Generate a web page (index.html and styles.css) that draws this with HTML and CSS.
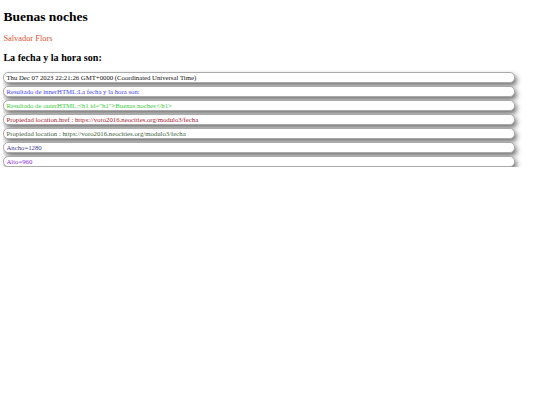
FILE: index.html
```html
<!DOCTYPE html>
<html lang="es">
<head>
<meta charset="utf-8">
<title>Fecha</title>
<link rel="stylesheet" href="styles.css">
</head>
<body>
<h1 id="h1" class="title">Buenas noches</h1>
<p class="author">Salvador Flors</p>
<h2 class="subtitle">La fecha y la hora son:</h2>
<div class="rows">
  <div class="row c-date">Thu Dec 07 2023 22:21:26 GMT+0000 (Coordinated Universal Time)</div>
  <div class="row c-inner">Resultado de innerHTML:La fecha y la hora son:</div>
  <div class="row c-outer">Resultado de outerHTML:&lt;h1 id="h1"&gt;Buenas noches&lt;/h1&gt;</div>
  <div class="row c-href">Propiedad location.href : https://voro2016.neocities.org/modulo3/fecha</div>
  <div class="row c-loc">Propiedad location : https://voro2016.neocities.org/modulo3/fecha</div>
  <div class="row c-w">Ancho=1280</div>
  <div class="row c-h">Alto=960</div>
</div>
</body>
</html>
```

FILE: styles.css
```css
html, body {
  background: #ffffff;
}
body {
  margin: 3.4px;
  font-family: "Liberation Serif", "Times New Roman", serif;
  color: #000;
}
.title {
  font-size: 13.5px;
  font-weight: bold;
  margin: 5.5px 0 9px;
}
.author {
  font-size: 8.4px;
  color: #dd5533;
  margin: 9px 0;
}
.subtitle {
  font-size: 10.1px;
  font-weight: bold;
  margin: 9px 0 9.5px;
}
.rows {
  display: flex;
  flex-direction: column;
  gap: 3px;
}
.row {
  width: 506px;
  height: 9px;
  line-height: 9px;
  font-size: 6.75px;
  padding: 0 2px;
  border: 1px solid #aaa;
  border-radius: 5px;
  background: #fff;
  box-shadow: 2px 3px 5px #777;
  white-space: nowrap;
}
.c-date { color: #111; }
.c-inner { color: #4646f0; }
.c-outer { color: #3ccc3c; }
.c-href { color: #a02030; }
.c-loc { color: #3f5f3f; }
.c-w { color: #3d3d8b; }
.c-h { color: #8a2be2; }
```
